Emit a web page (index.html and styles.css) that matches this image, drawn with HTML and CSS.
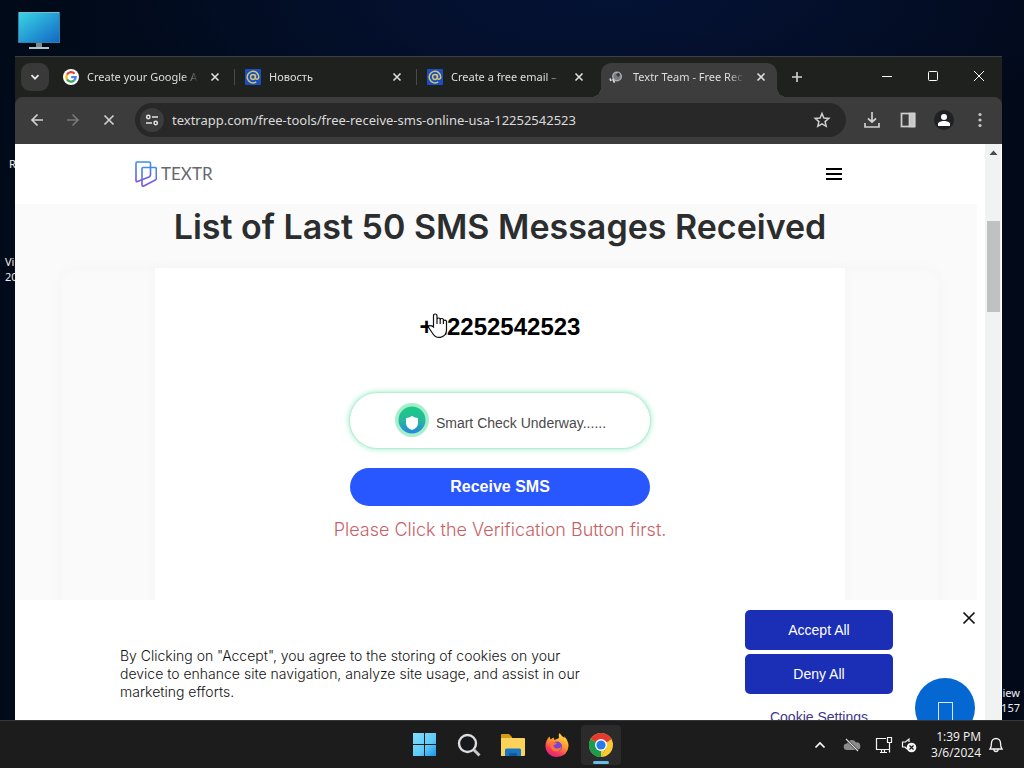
FILE: index.html
```html
<!DOCTYPE html>
<html lang="en">
<head>
<meta charset="utf-8">
<title>Desktop</title>
<link rel="stylesheet" href="styles.css">
</head>
<body>
<main class="desktop">
  <div class="shortcut shortcut-pc">
    <svg width="42" height="38" viewBox="0 0 42 38" aria-hidden="true">
      <defs><linearGradient id="pc" x1="0" y1="0" x2="1" y2="1"><stop offset="0" stop-color="#39d5e6"/><stop offset="1" stop-color="#1266c4"/></linearGradient></defs>
      <rect x=".5" y=".5" width="41" height="30" fill="url(#pc)" stroke="#347f9e"/>
      <path d="M1 .5h40" stroke="#75bed2"/>
      <path d="M18 31h6v4h-6z" fill="#7d8990"/><path d="M11 35h20v2H11z" fill="#b8c3c9"/>
    </svg>
  </div>
  <div class="shortcut shortcut-r">R</div>
  <div class="shortcut shortcut-vi">Vi<br>20</div>
  <div class="shortcut shortcut-view">iew<br>157</div>

  <section class="window">
    <header class="tabstrip">
      <button class="tab-search" aria-label="Search tabs"><svg width="12" height="12" viewBox="0 0 12 12"><path d="M2.500 4.200 6 7.700l3.500-3.500" fill="none" stroke="#e8e8e8" stroke-width="1.800"/></svg></button>
      <div class="tab">
        <svg class="favicon" viewBox="0 0 16 16"><circle cx="8" cy="8" r="8" fill="#fff"/><g fill="none" stroke-width="2.200"><path d="M11.600 4.700A4.700 4.700 0 0 0 4 5.600" stroke="#ea4335"/><path d="M4 5.600a4.700 4.700 0 0 0 0 4.800" stroke="#fbbc05"/><path d="M4 10.400a4.700 4.700 0 0 0 7.200 1" stroke="#34a853"/><path d="M11.200 11.400A4.700 4.700 0 0 0 12.700 8.200H8.200" stroke="#4285f4"/></g></svg>
        <span class="tab-title">Create your Google A</span>
        <button class="tab-close" aria-label="Close tab"><svg width="10" height="10" viewBox="0 0 10 10"><path d="m1.500 1.500 7 7m0-7-7 7"/></svg></button>
      </div>
      <div class="tab">
        <svg class="favicon" viewBox="0 0 16 16"><rect width="16" height="16" rx="1" fill="#1a4fc4"/><g fill="none" stroke="#d5c46c" stroke-width="1.500"><circle cx="8" cy="8" r="2.400"/><path d="M10.400 5.500v3.300c0 2.200 3.400 1.700 3.400-.8a5.800 5.800 0 1 0-2.600 4.900"/></g></svg>
        <span class="tab-title">Новость</span>
        <button class="tab-close" aria-label="Close tab"><svg width="10" height="10" viewBox="0 0 10 10"><path d="m1.500 1.500 7 7m0-7-7 7"/></svg></button>
      </div>
      <div class="tab tab-before-active">
        <svg class="favicon" viewBox="0 0 16 16"><rect width="16" height="16" rx="1" fill="#1a4fc4"/><g fill="none" stroke="#d5c46c" stroke-width="1.500"><circle cx="8" cy="8" r="2.400"/><path d="M10.400 5.500v3.300c0 2.200 3.400 1.700 3.400-.8a5.800 5.800 0 1 0-2.600 4.900"/></g></svg>
        <span class="tab-title">Create a free email –</span>
        <button class="tab-close" aria-label="Close tab"><svg width="10" height="10" viewBox="0 0 10 10"><path d="m1.500 1.500 7 7m0-7-7 7"/></svg></button>
      </div>
      <div class="tab tab-active">
        <svg class="favicon" viewBox="0 0 16 16"><circle cx="8" cy="7.500" r="4.300" fill="#777b7c" stroke="#a8adb0" stroke-width="1.400"/><path d="m7 5.500 3-2 1 3-2 1.500z" fill="#37393a"/><path d="m3.800 10 1.800 3.700M1 9.500l1 2.500" stroke="#d5d7d8" stroke-width="1.800"/></svg>
        <span class="tab-title">Textr Team - Free Rec</span>
        <button class="tab-close" aria-label="Close tab"><svg width="10" height="10" viewBox="0 0 10 10"><path d="m1.500 1.500 7 7m0-7-7 7"/></svg></button>
      </div>
      <button class="new-tab" aria-label="New tab"><svg width="12" height="12" viewBox="0 0 12 12"><path d="M6 1v10M1 6h10" stroke="#d2d4d4" stroke-width="1.600"/></svg></button>
      <div class="window-controls">
        <button aria-label="Minimize"><svg width="12" height="12" viewBox="0 0 12 12"><path d="M1 6.500h10"/></svg></button>
        <button aria-label="Maximize"><svg width="12" height="12" viewBox="0 0 12 12"><rect x="1.500" y="1.500" width="9" height="9" rx="1"/></svg></button>
        <button aria-label="Close window"><svg width="12" height="12" viewBox="0 0 12 12"><path d="m1 1 10 10m0-10L1 11"/></svg></button>
      </div>
    </header>

    <nav class="toolbar" aria-label="Browser">
      <button class="tool" aria-label="Back"><svg width="16" height="16" viewBox="0 0 16 16"><path d="M14 8H3m5.500-5.500L3 8l5.500 5.500"/></svg></button>
      <button class="tool tool-off" aria-label="Forward"><svg width="16" height="16" viewBox="0 0 16 16"><path d="M2 8h11M7.500 2.500 13 8l-5.500 5.500"/></svg></button>
      <button class="tool" aria-label="Stop"><svg width="16" height="16" viewBox="0 0 16 16"><path d="m3.500 3.500 9 9m0-9-9 9"/></svg></button>
      <div class="omnibox">
        <button class="site-info" aria-label="Site information"><svg width="14" height="14" viewBox="0 0 14 14"><g fill="none" stroke="#e3e3e3" stroke-width="1.500"><circle cx="3.300" cy="4" r="1.700"/><path d="M7 4h6M1 10h6"/><circle cx="10.700" cy="10" r="1.700"/></g></svg></button>
        <input class="url" aria-label="Address" value="textrapp.com/free-tools/free-receive-sms-online-usa-12252542523">
        <button class="star" aria-label="Bookmark"><svg width="18" height="18" viewBox="0 0 18 18"><path d="m9 2.500 1.900 4.500 4.900.4-3.700 3.200 1.100 4.700L9 12.800l-4.200 2.500 1.100-4.700-3.700-3.200 4.900-.4z" fill="none" stroke="#cfcfcf" stroke-width="1.500"/></svg></button>
      </div>
      <button class="tool" aria-label="Downloads"><svg width="18" height="18" viewBox="0 0 18 18"><path d="M9 1v10M5 7.500 9 11l4-3.500M2 12v4h14v-4"/></svg></button>
      <button class="tool" aria-label="Side panel"><svg width="16" height="16" viewBox="0 0 16 16"><rect x="1.500" y="1.500" width="13" height="13"/><path d="M9.500 1.500h5v13h-5z" fill="#c7c7c7"/></svg></button>
      <button class="tool" aria-label="Profile"><svg width="20" height="20" viewBox="0 0 20 20"><circle cx="10" cy="10" r="10" fill="#202124" stroke="none"/><circle cx="10" cy="7" r="3" fill="#fff" stroke="none"/><path d="M4 16v-2c0-4 12-4 12 0v2z" fill="#fff" stroke="none"/></svg></button>
      <button class="tool" aria-label="Menu"><svg width="16" height="16" viewBox="0 0 16 16"><g fill="#c7c7c7" stroke="none"><circle cx="8" cy="2.500" r="1.600"/><circle cx="8" cy="8" r="1.600"/><circle cx="8" cy="13.500" r="1.600"/></g></svg></button>
    </nav>

    <div class="viewport">
      <div class="page">
        <header class="site-header">
          <a class="brand" href="#" aria-label="Textr">
            <svg width="22" height="26" viewBox="0 0 22 26"><defs><linearGradient id="lg" x1="0" y1="0" x2="0" y2="1"><stop offset="0" stop-color="#3c8cf0"/><stop offset="1" stop-color="#7a55e0"/></linearGradient></defs><g fill="none" stroke="url(#lg)" stroke-width="1.600" stroke-linejoin="round"><path d="M2 1h12q1.500 0 1.500 1.500V14Q15.500 15 14 16L2.500 20.500Q1 21 1 19.500V2.500Q1 1 2 1z"/><path d="M8 6.500h12q1.300 0 1.300 1.500v9.500q0 1-1 1.500l-11.500 6Q7 25.500 7 24V8q0-1.500 1-1.500z"/></g></svg>
            <span>TEXTR</span>
          </a>
          <button class="hamburger" aria-label="Menu"><svg width="16" height="12" viewBox="0 0 16 12"><path d="M0 1h16M0 6h16M0 11h16" stroke="#000" stroke-width="2"/></svg></button>
        </header>
        <section class="messages">
          <h1>List of Last 50 SMS Messages Received</h1>
          <div class="panel"><div class="card">
            <h2>+12252542523</h2>
            <button class="verify">
              <svg width="36" height="36" viewBox="0 0 36 36"><defs><linearGradient id="sg" x1="0" y1="0" x2="0" y2="1"><stop offset="0" stop-color="#1acb84"/><stop offset=".5" stop-color="#25b99a"/><stop offset="1" stop-color="#2a86dd"/></linearGradient></defs><circle cx="18" cy="17" r="17" fill="#a5efcc"/><circle cx="18" cy="17" r="13.500" fill="url(#sg)"/><path d="M18 13q3 2 6 2v5q0 5-6 7-6-2-6-7v-5q3 0 6-2z" fill="#fff"/></svg>
              <span>Smart Check Underway......</span>
            </button>
            <button class="receive">Receive SMS</button>
            <p class="error">Please Click the Verification Button first.</p>
          </div></div>
        </section>
        <aside class="cookies">
          <p>By Clicking on "Accept", you agree to the storing of cookies on your device to enhance site navigation, analyze site usage, and assist in our marketing efforts.</p>
          <div class="cookie-actions">
            <button>Accept All</button>
            <button>Deny All</button>
            <a href="#">Cookie Settings</a>
          </div>
          <button class="dismiss" aria-label="Close"><svg width="14" height="14" viewBox="0 0 14 14"><path d="m1.500 1.500 11 11m0-11-11 11" stroke="#111" stroke-width="1.700"/></svg></button>
        </aside>
        <button class="chat" aria-label="Chat"><svg width="16" height="19" viewBox="0 0 16 19"><rect x="1.500" y=".5" width="14" height="18" fill="none" stroke="#d4e8fb"/></svg></button>
      </div>
      <div class="scrollbar"><svg width="17" height="17" viewBox="0 0 17 17"><path d="m4.500 11 4-4.500 4 4.500z" fill="#4b4b4b"/></svg><div class="thumb"></div></div>
    </div>
  </section>

  <svg class="pointer" width="22" height="26" viewBox="0 0 22 26" aria-hidden="true"><path d="M6.500 14V3q0-2 1.700-2 1.800 0 1.800 2v3.500q0-1.500 1.600-1.500T13.200 6.500v.5q0-1.500 1.600-1.500T16.400 7v1.500q0-1.400 1.500-1.400t1.600 1.600V17q0 6-6 7.300-5 .7-7.500-3.300l-4-6q-1-1.700.3-2.300 1.500-.6 4.200 1.300zM10 6v5m3.200-4v4m3.200-3v3" fill="#fff" stroke="#111" stroke-width="1.200"/></svg>
</main>

<footer class="taskbar">
  <div class="apps">
    <button aria-label="Start"><svg width="24" height="24" viewBox="0 0 24 24"><defs><linearGradient id="w" gradientUnits="userSpaceOnUse" x1="0" y1="0" x2="23" y2="23"><stop offset="0" stop-color="#83dcfa"/><stop offset=".6" stop-color="#5ccaf7"/><stop offset="1" stop-color="#1694ea"/></linearGradient></defs><path d="M0 0h11v11H0zM12 0h11v11H12zM0 12h11v11H0zM12 12h11v11H12z" fill="url(#w)"/></svg></button>
    <button aria-label="Search"><svg width="24" height="24" viewBox="0 0 24 24"><circle cx="10.500" cy="10.500" r="8.500" fill="#17181c" stroke="#dededf" stroke-width="2.400"/><path d="m17 17 5.500 5.500" stroke="#c9c9cb" stroke-width="3"/></svg></button>
    <button aria-label="File Explorer"><svg width="26" height="24" viewBox="0 0 26 24"><path d="M1 2q0-1 1-1h7l3 3v6H1z" fill="#d59a16"/><path d="M1 5h23q1 0 1 1v16q0 1-1 1H1z" fill="#fbd35b"/><path d="M5 23v-6q0-1.500 1.500-1.500h13q1.500 0 1.500 1.500v6z" fill="#1976c5"/><path d="M9 23v-2q0-1 1-1h6q1 0 1 1v2z" fill="#12589b"/></svg></button>
    <button aria-label="Firefox"><svg width="24" height="24" viewBox="0 0 24 24"><defs><linearGradient id="ff" x1=".8" y1="0" x2=".3" y2="1"><stop offset="0" stop-color="#ffe642"/><stop offset=".45" stop-color="#ff9632"/><stop offset=".8" stop-color="#f5355d"/><stop offset="1" stop-color="#d9258b"/></linearGradient></defs><path d="M12 24C5 24 .5 19 .5 13 .5 9 2 6 4.500 3.500l1 3 3-2 1 2.500Q12 6 14 5q-1-3 .5-5 2 3 5 5 0-1.300-.3-2Q23.500 8 23.500 13 23 23 12 24z" fill="url(#ff)"/><circle cx="12" cy="13.500" r="5" fill="#7b43d1"/><path d="M5 11q3-3 7-1-1 2-3.500 2.300 0 3 3.500 3.200 3 0 4.500-2-1 5-5.500 5-5 0-6-7.500z" fill="#ff7139"/></svg></button>
    <button class="running" aria-label="Chrome"><svg width="24" height="24" viewBox="0 0 24 24"><circle cx="12" cy="12" r="12" fill="#fcc934"/><path d="M12 12 1.600 6A12 12 0 0 1 22.400 6z" fill="#e33b2e"/><path d="M12 12 1.600 6A12 12 0 0 0 12 24l5.200-9z" fill="#1d9b4c"/><path d="M12 6h10.400l-4 3z" fill="#e33b2e"/><path d="M12 24 17.200 15 12 18z" fill="#fcc934"/><circle cx="12" cy="12" r="6" fill="#fff"/><circle cx="12" cy="12" r="4.600" fill="#247cec"/></svg></button>
  </div>
  <div class="tray">
    <button aria-label="Hidden icons"><svg width="12" height="12" viewBox="0 0 12 12"><path d="m1.500 8.500 4.500-4.500 4.500 4.500" stroke="#fff" stroke-width="1.700" fill="none"/></svg></button>
    <button class="cloud" aria-label="OneDrive"><svg width="18" height="16" viewBox="0 0 18 16"><path d="M4 13a3.300 3.300 0 0 1 0-6.600 5 5 0 0 1 9-1 3.800 3.800 0 0 1 1 7.600z" fill="#8b8b8b"/><path d="m3 2 12 12" stroke="#1c1c1c" stroke-width="2.400"/><path d="m3 2 12 12" stroke="#d8d8d8" stroke-width="1.200"/></svg></button>
    <button class="network" aria-label="Network"><svg width="18" height="18" viewBox="0 0 18 18"><path d="M11 2.500H1.500v11h13V8M5 16.500h7M6.500 13.500v3m3-3v3M12.500 1.500h4v5h-4zM14.500 6.500v10" fill="none" stroke="#f5f5f5" stroke-width="1.200"/></svg></button>
    <button class="sound" aria-label="Sound muted"><svg width="16" height="16" viewBox="0 0 16 16"><path d="M8 5V2L4.500 5H1.500v5H4l2 2" fill="none" stroke="#f5f5f5" stroke-width="1.200"/><circle cx="10.500" cy="10.500" r="4.800" fill="#f5f5f5"/><path d="m8.500 8.500 4 4m0-4-4 4" stroke="#1c1c1c" stroke-width="1.200"/></svg></button>
    <time class="clock" datetime="2024-03-06T13:39">1:39 PM<br>3/6/2024</time>
    <button class="bell" aria-label="Notifications"><svg width="14" height="16" viewBox="0 0 14 16"><path d="M1 12q1.500-2 1.500-6a4.500 4.500 0 0 1 9 0q0 4 1.500 6zM5 12.500q0 2 2 2t2-2" fill="none" stroke="#f5f5f5" stroke-width="1.300"/></svg></button>
  </div>
</footer>
</body>
</html>
```
FILE: styles.css
```css
* { box-sizing: border-box; }
body { margin: 0; height: 100vh; display: flex; flex-direction: column; overflow: hidden; font-family: "Noto Sans", "Open Sans", sans-serif; }
button { border: 0; padding: 0; background: none; color: inherit; display: flex; align-items: center; justify-content: center; flex: none; }
svg { display: block; flex: none; }

.desktop { flex: 1; min-height: 0; position: relative; overflow: hidden; background: radial-gradient(ellipse 50% 20% at 60% 0, #041234, transparent), linear-gradient(90deg, #010a18, #030d25 50%, #020919); }
.shortcut { position: absolute; color: #eee; font-size: 11px; line-height: 15px; }
.shortcut-pc { left: 18px; top: 12px; }
.shortcut-r { left: 9px; top: 156px; }
.shortcut-vi { left: 5px; top: 254px; }
.shortcut-view { right: 4px; bottom: 5px; text-align: right; }

.window { position: absolute; top: 56px; right: 22px; bottom: 0; left: 15px; display: flex; flex-direction: column; border-top: 1px solid #3b4045; background: #1f211f; }
.tabstrip { display: flex; height: 40px; padding-left: 6px; align-items: center; color: #dedede; flex: none; }
.tab-search { width: 28px; height: 28px; margin-right: 4px; border-radius: 9px; background: #383938; }
.tab { position: relative; flex: 0 1 182px; min-width: 0; height: 34px; align-self: flex-end; display: flex; align-items: center; gap: 8px; padding: 0 12px 6px 10px; }
.tab::after { content: ""; position: absolute; right: 0; top: 6px; width: 1px; height: 16px; background: #494b4a; }
.tab-before-active::after { display: none; }
.favicon { width: 16px; height: 16px; }
.tab-title { flex: 1; min-width: 0; overflow: hidden; white-space: nowrap; font-size: 11px; line-height: 18px; mask-image: linear-gradient(90deg, #000 85%, transparent); }
.tab-close { width: 16px; height: 16px; }
.tab-close svg { stroke: #dedede; stroke-width: 1.600; }
.tab-active { z-index: 1; }
.tab-active::before { content: ""; position: absolute; z-index: -1; inset: 0 4px 0 2px; border-radius: 10px 10px 0 0; background: #3c3d3c; }
.tab-active::after { right: -6px; top: auto; bottom: 0; left: -8px; width: auto; height: 10px; z-index: -1; background: radial-gradient(circle at 0 0, transparent 10px, #3c3d3c 10px) left / 10px 10px no-repeat, radial-gradient(circle at 100% 0, transparent 10px, #3c3d3c 10px) right / 10px 10px no-repeat; }
.new-tab { width: 32px; height: 32px; }
.window-controls { display: flex; align-self: stretch; margin-left: auto; }
.window-controls button { width: 46px; height: 38px; }
.window-controls svg { fill: none; stroke: #fff; stroke-width: 1; }

.toolbar { display: flex; align-items: center; height: 47px; padding: 0 4px 2px; flex: none; border-radius: 8px 8px 0 0; background: #3c3c3c; }
.tool { width: 36px; height: 36px; }
.tool svg { fill: none; stroke: #d0d0d0; stroke-width: 1.700; }
.tool-off { opacity: .4; }
.omnibox { flex: 1; min-width: 0; height: 34px; margin: 0 8px; padding: 0 12px 0 5px; display: flex; align-items: center; border-radius: 17px; background: #282828; }
.site-info { width: 24px; height: 24px; border-radius: 50%; background: #3c3c3c; }
.url { flex: 1; min-width: 0; margin-left: 8px; padding: 0; border: 0; outline: 0; background: none; color: #dadada; font: 13px/20px "Noto Sans", "Open Sans", sans-serif; }
.star { width: 24px; height: 24px; }

.viewport { flex: 1; min-height: 0; display: flex; background: #fff; }
.page { flex: 1; min-width: 0; position: relative; overflow: hidden; font-family: Inter, sans-serif; display: flex; flex-direction: column; }
.scrollbar { width: 17px; background: #f1f2f2; border-right: 1px solid #fff; }
.thumb { height: 91px; margin: 60px 1px 0 2px; background: #c0c1c1; }
.site-header { height: 60px; flex: none; padding: 0 143px 0 120px; display: flex; align-items: center; justify-content: space-between; }
.brand { display: flex; align-items: center; gap: 4px; text-decoration: none; color: #66686c; font: 17px/24px Lato, sans-serif; }
.hamburger { width: 16px; height: 24px; }
.messages { flex: 1; min-height: 0; margin-right: 8px; background: #fafafa; display: flex; flex-direction: column; }
h1 { margin: 0 -8px 18px 0; text-align: center; font-size: 34px; line-height: 46px; font-weight: 600; color: #2b2d2f; }
.panel { flex: 1; margin: 0 37px 0 45px; padding: 0 95px; border-radius: 16px 16px 0 0; box-shadow: 0 0 8px #f4f4f4, inset 0 0 6px #f6f6f6; }
.card { height: 100%; padding-top: 42px; display: flex; flex-direction: column; align-items: center; background: #fff; box-shadow: 0 0 12px #f5f5f5; }
h2 { margin: 0 0 49px; font: bold 24px/34px "Liberation Sans", sans-serif; color: #000; }
.verify { width: 300px; height: 55px; padding: 0; gap: 6px; border-radius: 28px; background: #fff; box-shadow: 0 0 5px 2px #b4f2d7, 0 0 1px 1px #c1dccf; color: #4a4a4a; font: 14px/20px "Liberation Sans", sans-serif; }
.verify span { padding-top: 5px; }
.receive { width: 300px; height: 38px; margin-top: 20px; border-radius: 19px; background: #2856ff; color: #fff; font: bold 16px/20px "Liberation Sans", sans-serif; }
.error { margin: 12px 0 0; color: #c95f66; font-size: 18px; font-weight: 300; line-height: 24px; }
.cookies { position: absolute; right: 0; bottom: 0; left: 0; height: 120px; padding: 10px 92px 0 105px; display: flex; justify-content: space-between; background: #fff; }
.cookies p { width: 470px; margin: 37px 0 0; font-size: 14px; font-weight: 300; line-height: 18px; color: #111; }
.cookie-actions { width: 148px; display: flex; flex-direction: column; gap: 4px; font: 14px/20px "Liberation Sans", sans-serif; text-align: center; }
.cookie-actions button { height: 40px; border-radius: 5px; background: #1b2eb6; color: #fff; font: inherit; }
.cookie-actions a { margin-top: 9px; color: #41378c; text-decoration: none; }
.dismiss { position: absolute; top: 10px; right: 8px; width: 16px; height: 16px; }
.chat { position: absolute; right: 10px; bottom: -18px; width: 60px; height: 60px; padding-top: 7px; border-radius: 50%; background: #0567d2; }
.pointer { position: absolute; left: 427px; top: 313px; }

.taskbar { height: 48px; flex: none; display: grid; grid-template-columns: 1fr auto 1fr; align-items: center; border-top: 1px solid #35363a; background: #1c1c1c; color: #f5f5f5; }
.apps { grid-column: 2; display: flex; gap: 4px; padding-left: 2px; }
.apps button { position: relative; width: 40px; height: 40px; border-radius: 4px; }
.apps .running { background: #2b2b2b; }
.running::after { content: ""; position: absolute; bottom: 1px; width: 16px; height: 3px; border-radius: 2px; background: #65bde9; }
.tray { display: flex; align-items: center; justify-content: flex-end; padding-right: 21px; }
.cloud { margin-left: 17px; }
.network { margin-left: 14px; }
.sound { margin-left: 8px; }
.clock { margin-left: 14px; font: 12px/16px "Open Sans", sans-serif; text-align: right; }
.bell { margin-left: 8px; }
```
